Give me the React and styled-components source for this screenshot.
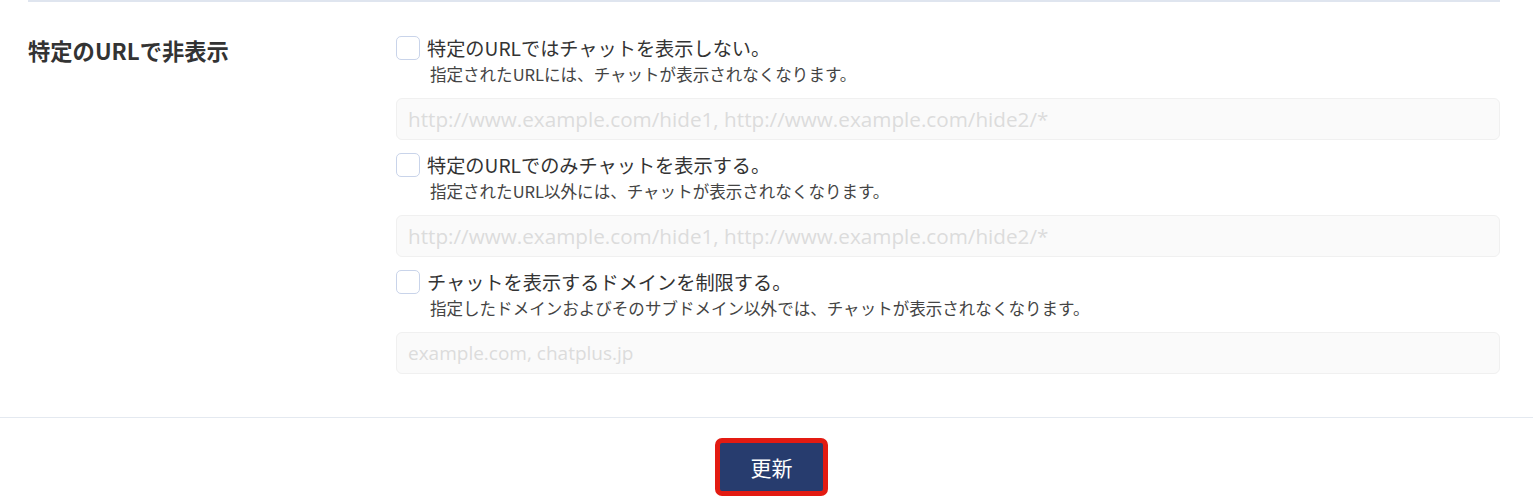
import React from "react";
import styled, { createGlobalStyle } from "styled-components";

const GlobalStyle = createGlobalStyle`
  body {
    margin: 0;
    background: #fff;
    font-family: "Noto Sans CJK JP", "Noto Sans", sans-serif;
    color: #333;
  }
`;

const Page = styled.div`
  width: 1533px;
`;

const Section = styled.div`
  margin: 0 33px 0 28px;
  border-top: 2px solid #dfe5ef;
  display: flex;
  padding: 33px 0 31px;
`;

const Heading = styled.div`
  width: 368px;
  flex-shrink: 0;
  font-size: 22.3px;
  font-weight: 700;
  color: #333;
  line-height: 26px;
  padding-top: 2px;
`;

const Options = styled.div`
  flex: 1;
  display: flex;
  flex-direction: column;
`;

const Option = styled.div`
  display: flex;
  flex-direction: column;
  margin-bottom: 12px;
`;

const CheckRow = styled.label`
  display: flex;
  align-items: center;
  gap: 7px;
  height: 26px;
  font-size: 19.2px;
  color: #333;
`;

const Box = styled.span`
  width: 22px;
  height: 22px;
  border: 1px solid #c9d4ea;
  border-radius: 5px;
  background: #fff;
  flex-shrink: 0;
`;

const Hint = styled.div`
  font-size: 16.55px;
  line-height: 22px;
  color: #444;
  margin: 2px 0 0 34px;
`;

const TextInput = styled.input`
  margin-top: 13px;
  height: 42px;
  box-sizing: border-box;
  border: 1px solid #f0f0f0;
  border-radius: 6px;
  background: #fafafa;
  padding: 0 11px;
  font-family: "Open Sans", "Noto Sans", sans-serif;
  font-size: ${(p) => p.$size}px;
  outline: none;
  &::placeholder {
    color: #dcdcdc;
  }
`;

const Footer = styled.div`
  border-top: 1px solid #e4e9f0;
  display: flex;
  justify-content: center;
  padding: 20px 0 0 10px;
`;

const SubmitButton = styled.button`
  width: 113px;
  height: 58px;
  box-sizing: border-box;
  background: #273c6e;
  border: 5px solid #e31b12;
  border-radius: 7px;
  color: #fff;
  font-family: "Noto Sans CJK JP", sans-serif;
  font-size: 21px;
  cursor: pointer;
`;

const options = [
  {
    label: "特定のURLではチャットを表示しない。",
    hint: "指定されたURLには、チャットが表示されなくなります。",
    placeholder: "http://www.example.com/hide1, http://www.example.com/hide2/*",
    size: 20.7,
  },
  {
    label: "特定のURLでのみチャットを表示する。",
    hint: "指定されたURL以外には、チャットが表示されなくなります。",
    placeholder: "http://www.example.com/hide1, http://www.example.com/hide2/*",
    size: 20.7,
  },
  {
    label: "チャットを表示するドメインを制限する。",
    hint: "指定したドメインおよびそのサブドメイン以外では、チャットが表示されなくなります。",
    placeholder: "example.com, chatplus.jp",
    size: 19,
  },
];

export default function App() {
  return (
    <Page>
      <GlobalStyle />
      <Section>
        <Heading>特定のURLで非表示</Heading>
        <Options>
          {options.map((o, i) => (
            <Option key={i}>
              <CheckRow>
                <Box />
                {o.label}
              </CheckRow>
              <Hint>{o.hint}</Hint>
              <TextInput placeholder={o.placeholder} $size={o.size} />
            </Option>
          ))}
        </Options>
      </Section>
      <Footer>
        <SubmitButton>更新</SubmitButton>
      </Footer>
    </Page>
  );
}
